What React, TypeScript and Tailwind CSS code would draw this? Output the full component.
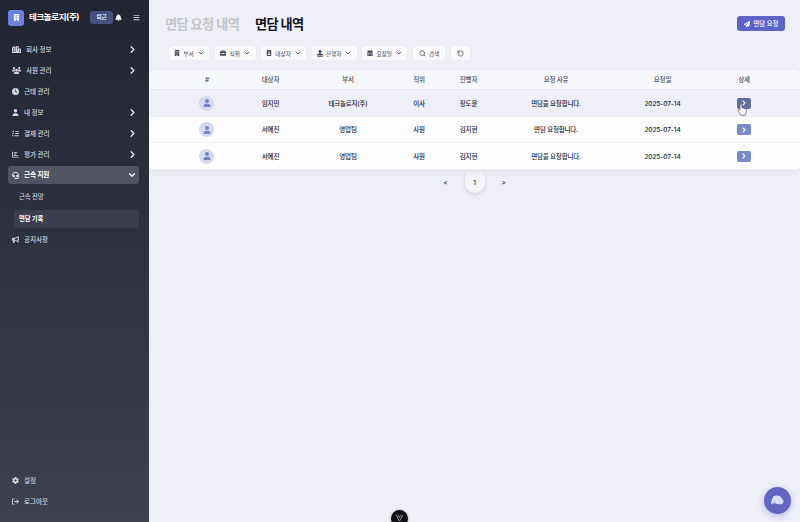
import type { ReactNode } from 'react';
import {
  FaBriefcase, FaBuilding, FaBullhorn, FaCalendarDays, FaChartBar, FaCity, FaClock,
  FaGear, FaHeadset, FaListCheck, FaPaperPlane, FaUser, FaUsers,
  FaArrowRightFromBracket, FaBell, FaBars, FaIdBadge,
} from 'react-icons/fa6';
import { ChevronDown, ChevronRight, RotateCcw, Search } from 'lucide-react';

type Item = { icon: ReactNode; label: string; arrow?: boolean; wide?: boolean };

const menu: Item[] = [
  { icon: <FaCity size={9} />, label: '회사 정보', arrow: true, wide: true },
  { icon: <FaUsers size={9} />, label: '사원 관리', arrow: true, wide: true },
  { icon: <FaClock size={7} />, label: '근태 관리' },
  { icon: <FaUser size={7} />, label: '내 정보', arrow: true },
  { icon: <FaListCheck size={7} />, label: '결재 관리', arrow: true },
  { icon: <FaChartBar size={7} />, label: '평가 관리', arrow: true },
];

function MenuRow({ icon, label, arrow, wide }: Item) {
  return (
    <div className="flex h-[21.1px] items-center pr-[11px] pl-[12px] text-[#d3d5de]">
      <span className={wide ? 'flex w-[14px] shrink-0' : 'flex w-[12px] shrink-0'}>{icon}</span>
      <span className="flex-1 pt-[1.5px]">{label}</span>
      {arrow && <ChevronRight size={11} strokeWidth={2.6} className="text-[#f0f0f5]" />}
    </div>
  );
}

function HostIcon() {
  return (
    <svg width="6" height="7" viewBox="0 0 6 7" fill="currentColor">
      <circle cx="3" cy="1.5" r="1.4" />
      <path d="M2.4 2.5H3.6V3.8H5Q6 4 6 5.2H0Q0 4 1 3.8H2.4ZM.3 5.8H5.7V6.7H.3Z" />
    </svg>
  );
}

const filters: Item[] = [
  { icon: <FaBuilding size={6} />, label: '부서' },
  { icon: <FaBriefcase size={6} />, label: '직위' },
  { icon: <FaIdBadge size={6} />, label: '대상자' },
  { icon: <HostIcon />, label: '진행자' },
  { icon: <FaCalendarDays size={6} />, label: '요청일' },
];
const filterWidths = ['w-[40px]', 'w-[41px]', 'w-[44.5px]', 'w-[45px]', 'w-[45px]'];

const rows = [
  ['임지민', '테크놀로지(주)', '이사', '장도윤', '면담을 요청합니다.', '2025-07-14'],
  ['서예진', '영업팀', '사원', '김지현', '면담 요청합니다.', '2025-07-14'],
  ['서예진', '영업팀', '사원', '김지현', '면담을 요청합니다.', '2025-07-14'],
];
const columns = 'grid grid-cols-[62px_65px_90px_52px_47px_128px_85px_78px] items-center justify-items-center pl-[27px]';

function Sidebar() {
  return (
    <aside className="relative z-20 flex h-full w-[149px] shrink-0 flex-col bg-linear-to-b from-[#222532] to-[#3d4150] text-[6.6px] font-medium tracking-[-0.1px]">
      <div className="flex h-[34px] shrink-0 items-center pt-px pl-2">
        <span className="flex size-4 shrink-0 items-center justify-center rounded-[3px] bg-linear-to-br from-[#6685e3] to-[#747bdc] text-white"><FaBuilding size={7} /></span>
        <span className="ml-[5px] w-[61px] whitespace-nowrap text-[8.5px] font-bold tracking-[-0.4px] text-white">테크놀로지(주)</span>
        <span className="flex h-[13px] w-[23px] shrink-0 items-center justify-center rounded-[3px] bg-[#475080] pt-px text-[5.6px] text-white">퇴근</span>
        <FaBell size={7} className="ml-[2px] shrink-0 text-white" />
        <FaBars size={7} className="ml-[11px] shrink-0 text-[#d0d1d7]" />
      </div>
      <nav className="pt-[4.5px]">
        {menu.map((item) => <MenuRow key={item.label} {...item} />)}
        <div className="mr-[10px] ml-2 mt-px flex h-[18px] items-center rounded-[3px] bg-[#515461] pr-[2px] pl-[4px] text-white">
          <span className="w-[12px]"><FaHeadset size={7} /></span>
          <span className="flex-1 pt-px font-bold">근속 지원</span>
          <ChevronDown size={10} strokeWidth={2.8} />
        </div>
        <div className="flex h-[26px] items-center pl-[19px] text-[6.3px] text-[#cfd1da]">근속 전망</div>
        <div className="mr-[10px] ml-[14px] flex h-[18px] items-center rounded-[3px] bg-[#3b3e4d] pt-px pl-[5px] text-[6.3px] font-bold text-white">면담 기록</div>
        <div className="pt-px"><MenuRow icon={<FaBullhorn size={7} />} label="공지사항" /></div>
      </nav>
      <div className="mt-auto pb-[10px]">
        <MenuRow icon={<FaGear size={7} />} label="설정" />
        <MenuRow icon={<FaArrowRightFromBracket size={7} />} label="로그아웃" />
      </div>
    </aside>
  );
}

export default function App() {
  return (
    <div className="relative flex h-[522px] w-[800px] overflow-hidden bg-[#efeff8] font-[Inter,'Noto_Sans_CJK_KR',sans-serif] leading-none text-[#20232f]">
      <Sidebar />
      <main className="flex min-w-0 flex-1 flex-col">
        <header className="flex h-[46px] shrink-0 items-center pt-px pr-[15px] pl-[16px] text-[13.2px] font-bold tracking-[-0.6px]">
          <span className="w-[90px] pt-[2px] whitespace-nowrap text-[#c5c5c9]">면담 요청 내역</span>
          <span className="pt-[2px] whitespace-nowrap text-[#10121d]">면담 내역</span>
          <button className="ml-auto flex h-[15px] w-[48px] items-center justify-center gap-[4px] rounded-[3px] bg-[#5c65c7] text-[6.3px] font-medium tracking-normal whitespace-nowrap text-white">
            <FaPaperPlane size={6} /><span className="pt-px">면담 요청</span>
          </button>
        </header>
        <div className="flex h-[23.5px] shrink-0 gap-[5.7px] pt-[0.3px] pl-[20px] text-[5.7px] text-[#41444e]">
          {filters.map((f, i) => (
            <div key={f.label} className={`${filterWidths[i]} flex h-[14px] shrink-0 items-center justify-center gap-[3px] rounded-[3px] bg-[#fbfbfe] whitespace-nowrap shadow-[0_0_1px_#d9dae4]`}>
              {f.icon}<span className="pt-px">{f.label}</span><ChevronDown size={8} strokeWidth={2.6} className="-mr-px" />
            </div>
          ))}
          <div className="flex h-[14px] w-[32px] shrink-0 items-center justify-center gap-[3px] rounded-[3px] bg-[#fbfbfe] shadow-[0_0_1px_#d9dae4]"><Search size={7} strokeWidth={2.5} /><span className="pt-px">검색</span></div>
          <div className="flex h-[14px] w-[19px] shrink-0 items-center justify-center rounded-[3px] bg-[#fbfbfe] shadow-[0_0_1px_#d9dae4]"><RotateCcw size={7} strokeWidth={2.5} /></div>
        </div>
        <section className="relative z-10 h-[100.5px] shrink-0 overflow-hidden rounded-[5px] bg-[#fdfdfe] text-[6.5px] font-medium tracking-[-0.2px] whitespace-nowrap shadow-[0_2px_6px_#dddeea]">
          <div className={`${columns} h-[20.5px] border-b border-[#e8e8ef] bg-[#f7f8fc] text-[#454854]`}>
            {['#', '대상자', '부서', '직위', '진행자', '요청 사유', '요청일', '상세'].map((t) => <span key={t} className="pt-px">{t}</span>)}
          </div>
          {rows.map((row, i) => (
            <div key={i} className={`${columns} h-[26.6px] border-b border-[#f0f0f5] pt-px ${i === 0 ? 'bg-[#efeff7]' : 'bg-[#fdfdfe]'}`}>
              <span className="-ml-px flex size-[15px] items-center justify-center rounded-full bg-[#d5d9ee] text-[#7185ca]"><FaUser size={8} /></span>
              {row.map((text, j) => <span key={j} className={j === 5 ? 'pt-px tracking-[-0.08px]' : 'pt-px'}>{text}</span>)}
              <span className={`flex h-[11px] w-[14px] items-center justify-center rounded-[2px] text-white ${i === 0 ? 'bg-[#606b9f]' : 'bg-[#788bc8]'}`}><ChevronRight size={8} strokeWidth={3.4} /></span>
            </div>
          ))}
        </section>
        <div className="flex h-[27px] items-center justify-center gap-[17px] text-[6.5px] font-medium">
          <span>&lt;</span>
          <span className="-mt-[6px] flex h-[25px] w-[20px] items-center justify-center rounded-[10px] bg-[#f5f5fa] pt-[6px] shadow-[0_2px_4px_#cfd0dc]">1</span>
          <span>&gt;</span>
        </div>
      </main>
      <svg className="absolute top-[103px] left-[737px] z-20" width="10" height="13" viewBox="0 0 10 13">
        <path d="M3 7V2.2Q3 1 4 1T5 2.2V5Q6.4 4.4 6.8 5.5Q8 5 8.4 6.2Q9.5 6.1 9.4 7.5L8.8 10.8L7.9 12.3H3.8L2.3 10L1 8.1Q.7 6.8 1.8 6.9Z" fill="#f7f7fa" stroke="#555866" strokeWidth=".7" />
      </svg>
      <div className="absolute top-[487px] left-[764px] flex size-[27px] items-center justify-center rounded-full bg-[#6167c3] shadow-[0_2px_7px_#b5b7e1]">
        <svg width="15" height="11" viewBox="0 0 15 11">
          <path d="M3.6 1Q7 0 10 1L13.6 5.7Q13.8 8.8 11.7 9.3L7 9Q4.8 8 3 8.3L1.8 9.5Q.6 9 1.3 7.3L2 4.6Z" fill="#d9dcf7" />
          <path d="M4.5 8.3L5.3 6.6M10 9.2L10.8 10" fill="none" stroke="#8b90d8" strokeWidth=".8" />
        </svg>
      </div>
      <div className="absolute top-[510px] left-[391px] flex size-[17px] justify-center rounded-full bg-[#101114] pt-[4px] shadow-[0_0_3px_#a7a8af]">
        <svg width="9" height="9" viewBox="0 0 9 9"><path d="M1 1L4.5 7L8 1M3 1L4.5 3.6L6 1" fill="none" stroke="#96979d" /></svg>
      </div>
    </div>
  );
}
